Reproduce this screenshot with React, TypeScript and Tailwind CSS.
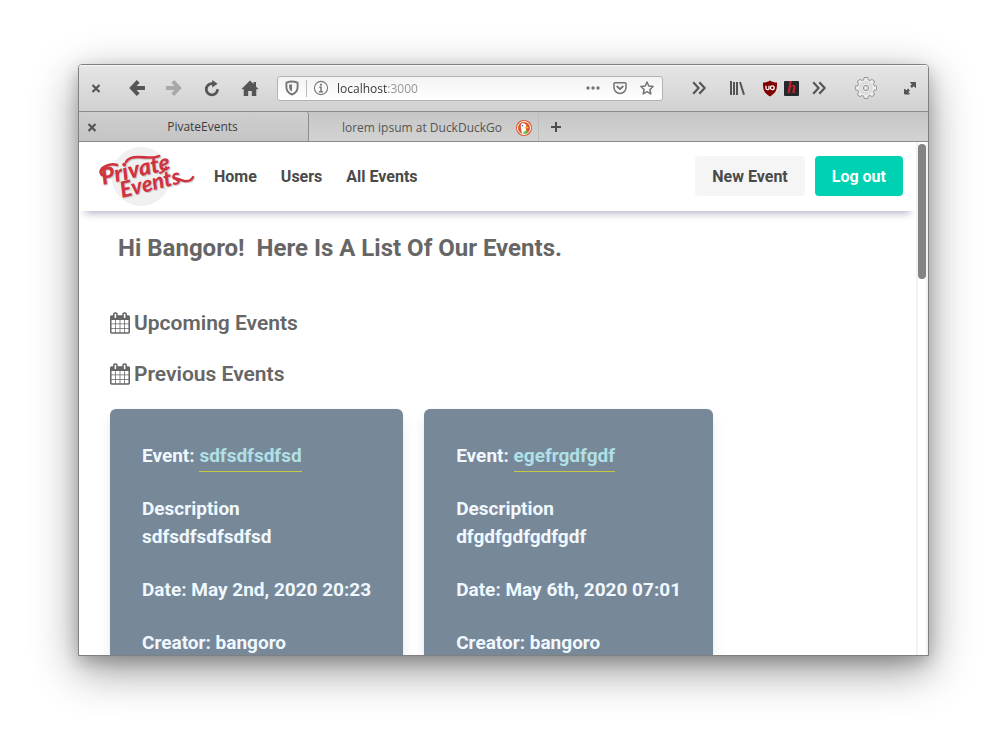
import type { ReactNode } from "react";

const calendarPath =
  "M192 1664h288v-288h-288v288zm352 0h320v-288h-320v288zm-352-352h288v-320h-288v320zm352 0h320v-320h-320v320zm-352-384h288v-288h-288v288zm736 736h320v-288h-320v288zm-384-736h320v-288h-320v288zm768 736h288v-288h-288v288zm-384-352h320v-320h-320v320zm-352-864v-288q0-13-9.5-22.5t-22.5-9.5h-64q-13 0-22.5 9.5t-9.5 22.5v288q0 13 9.5 22.5t22.5 9.5h64q13 0 22.5-9.5t9.5-22.5zm736 864h288v-320h-288v320zm-384-384h320v-288h-320v288zm384 0h288v-288h-288v288zm32-480v-288q0-13-9.5-22.5t-22.5-9.5h-64q-13 0-22.5 9.5t-9.5 22.5v288q0 13 9.5 22.5t22.5 9.5h64q13 0 22.5-9.5t9.5-22.5zm384-64v1280q0 52-38 90t-90 38h-1408q-52 0-90-38t-38-90v-1280q0-52 38-90t90-38h128v-96q0-66 47-113t113-47h64q66 0 113 47t47 113v96h384v-96q0-66 47-113t113-47h64q66 0 113 47t47 113v96h128q52 0 90 38t38 90z";

function CalendarIcon() {
  return (
    <svg viewBox="64 0 1664 1792" className="h-[22px] w-5 shrink-0" fill="currentColor" aria-hidden="true">
      <path d={calendarPath} />
    </svg>
  );
}

function CloseIcon() {
  return (
    <svg viewBox="0 0 10 10" className="size-[10px]" fill="none" stroke="#555" strokeWidth="2.2" aria-hidden="true">
      <path d="M1.500 2l7 7M8.500 2l-7 7" />
    </svg>
  );
}

function ArrowIcon({ flip = false }: { flip?: boolean }) {
  return (
    <svg viewBox="0 0 16 16" className="size-4" fill="none" stroke={flip ? "#a8a8a8" : "#555"} strokeWidth="4" aria-hidden="true">
      <path d={flip ? "M0 8h13M6.800 1.400L13 8l-6.200 6.600" : "M16 8H3M9.200 1.400L3 8l6.200 6.600"} />
    </svg>
  );
}

function ReloadIcon() {
  return (
    <svg viewBox="0 0 16 17" className="h-[17px] w-4" fill="none" aria-hidden="true">
      <path d="M13.5 9.200A5.600 5.600 0 1 1 8 3.700h2" stroke="#555" strokeWidth="2.8" />
      <path d="M8.2 0v7.500l5.400-3.700z" fill="#555" />
    </svg>
  );
}

function HomeIcon() {
  return (
    <svg viewBox="0 0 18 17" className="h-[17px] w-[18px]" fill="#555" aria-hidden="true">
      <path d="M9 .5L.3 9.3h2.4V16h4.5v-5h3.6v5h4.5V9.300h2.4L15 6.600V2h-2.500v2.100z" />
    </svg>
  );
}

function ShieldIcon() {
  return (
    <svg viewBox="0 0 14 16" className="h-4 w-[14px]" fill="none" aria-hidden="true">
      <path d="M7 1.500C9 1.500 11 2 12.600 2.600V7c0 3.600-2.200 6.200-5.600 7.500C3.600 13.200 1.400 10.600 1.400 7V2.600C3 2 5 1.500 7 1.500z" stroke="#777" strokeWidth="1.900" />
      <path d="M7 4.300v7.300c-1.800-.9-2.900-2.600-2.900-4.600V4.800C5 4.500 5.900 4.300 7 4.300z" fill="#777" />
    </svg>
  );
}

function InfoIcon() {
  return (
    <svg viewBox="0 0 16 16" className="size-4 shrink-0" fill="none" stroke="#777" aria-hidden="true">
      <circle cx="8" cy="8" r="6.600" strokeWidth="1.100" />
      <path d="M8 3.800v1.900" strokeWidth="1.800" />
      <path d="M6.300 7.300H8v4M6 11.700h4" strokeWidth="1.500" />
    </svg>
  );
}

function PocketIcon() {
  return (
    <svg viewBox="0 0 14 14" className="size-[14px]" fill="none" stroke="#737373" strokeWidth="1.500" strokeLinecap="round" strokeLinejoin="round" aria-hidden="true">
      <path d="M2 1.800h10a1 1 0 0 1 1 1v3.600a6 6 0 0 1-12 0V2.800a1 1 0 0 1 1-1z" />
      <path d="M4.200 5.500L7 8.100l2.800-2.600" strokeWidth="1.800" />
    </svg>
  );
}

function StarIcon() {
  return (
    <svg viewBox="0 0 14 14" className="size-[14px]" fill="none" stroke="#737373" strokeWidth="1.500" strokeLinejoin="round" aria-hidden="true">
      <path d="M7 1l1.800 4 4.300.5-3.200 3 .9 4.400L7 10.700l-3.800 2.200.9-4.400-3.200-3L5.200 5z" />
    </svg>
  );
}

function ChevronsIcon() {
  return (
    <svg viewBox="0 0 14 14" className="h-[14px] w-[14px]" fill="none" stroke="#555" strokeWidth="2.100" strokeLinejoin="round" aria-hidden="true">
      <path d="M1.200 1.200L6.600 7l-5.400 5.800M7.300 1.200L12.700 7l-5.400 5.800" />
    </svg>
  );
}

function LibraryIcon() {
  return (
    <svg viewBox="0 0 16 14" className="h-[14px] w-4" fill="none" stroke="#555" strokeWidth="2" aria-hidden="true">
      <path d="M2 0v14M5 1v13M8 1v13M11 1l4 12.700" />
    </svg>
  );
}

function UblockIcon() {
  return (
    <svg viewBox="0 0 16 17" className="h-[17px] w-4" aria-hidden="true">
      <path d="M8 .5C10 2 12.500 2.500 15 2.600c0 6.800-.4 10.200-7 13.900C1.400 12.800 1 9.400 1 2.600 3.500 2.500 6 2 8 .5z" fill="#800000" />
      <path d="M4 5.800v2.400q0 1.500 1.500 1.500T7 8.200V5.800" fill="none" stroke="#fff" strokeWidth="1.300" />
      <circle cx="10.300" cy="7.700" r="1.900" fill="none" stroke="#fff" strokeWidth="1.300" />
    </svg>
  );
}

function GearIcon() {
  const angles = [0, 45, 90, 135, 180, 225, 270, 315];
  return (
    <svg viewBox="0 0 24 24" className="size-6" aria-hidden="true">
      <g fill="#999" stroke="#999" strokeWidth="1.800" strokeLinejoin="round">
        <circle cx="12" cy="12" r="8" />
        {angles.map((a) => (
          <path key={a} d="M9.900 5l.6-3h3l.6 3z" transform={`rotate(${a} 12 12)`} />
        ))}
      </g>
      <g fill="#ececec">
        <circle cx="12" cy="12" r="8" />
        {angles.map((a) => (
          <path key={a} d="M9.900 5l.6-3h3l.6 3z" transform={`rotate(${a} 12 12)`} />
        ))}
      </g>
      <circle cx="12" cy="12" r="5.500" fill="none" stroke="#dadada" strokeWidth="2.500" />
      <circle cx="12" cy="12" r="2.700" fill="#dcdcdc" stroke="#999" />
    </svg>
  );
}

function ExpandIcon() {
  return (
    <svg viewBox="0 0 14 14" className="size-[14px]" fill="#555" stroke="#555" aria-hidden="true">
      <path d="M7.500 1.500h5v5zM1.500 8v5h5z" strokeWidth="1" />
      <path d="M8 6l3-3M3 11.500l3-3" strokeWidth="2.600" />
    </svg>
  );
}

function DuckIcon() {
  return (
    <svg viewBox="0 0 16 16" className="size-4" aria-hidden="true">
      <circle cx="8" cy="8" r="8" fill="#de5833" />
      <circle cx="8" cy="8" r="6.500" fill="#de5833" stroke="#fff" />
      <path d="M5 4.200c1-1.300 4.700-1.300 5.200 1.500.3 2-.6 3 .2 7.800-1.400.8-3 .9-4.300.3C5.700 10.500 4.200 6.500 5 4.200z" fill="#fff" />
      <path d="M8.500 7.200c1.400-.7 3.700-.6 4 0 .2.700-1.900 1.300-3.600 1.600z" fill="#fdb813" />
      <path d="M7.600 11.600l3.800-1v3l-4 .3z" fill="#66bd47" />
      <circle cx="6.500" cy="5.800" r=".7" fill="#2d4f8e" />
    </svg>
  );
}

function Logo() {
  return (
    <svg viewBox="0 0 110 68" className="h-[68px] w-[110px]" role="img" aria-label="Private Events">
      <circle cx="49" cy="34.500" r="29.500" fill="#f0f0f0" />
      {[
        { color: "#c9c9c9", dx: 1, dy: 1 },
        { color: "#d0323e", dx: 0, dy: 0 },
      ].map(({ color, dx, dy }) => (
        <g key={color} transform={`translate(${dx} ${dy})`} fill={color} className="font-['Lato','Liberation_Sans',sans-serif] font-black italic">
          <text x="11" y="43" fontSize="23" transform="rotate(-13 11 43)">Private</text>
          <text x="30" y="56" fontSize="22" transform="rotate(-14 30 56)">Events</text>
          <g fill="none" stroke={color} strokeLinecap="round">
            <path d="M10 33c-3-3-1-7 4-9 4-2 8-2 11-1" strokeWidth="2.600" />
            <path d="M34 20c2-4 6-5 12-5 8 0 16 2 21-1" strokeWidth="2.600" />
            <path d="M85 38c4-2 6 2 10 1 3 0 5-2 6-4" strokeWidth="2.400" />
            <path d="M74 25c-1 3-3 5-6 6" strokeWidth="2" />
          </g>
        </g>
      ))}
    </svg>
  );
}

function IconButton({ label, className, children }: { label: string; className: string; children: ReactNode }) {
  return (
    <button type="button" aria-label={label} className={`flex h-6 shrink-0 items-center justify-center ${className}`}>
      {children}
    </button>
  );
}

function Toolbar() {
  return (
    <div className="flex h-[47px] shrink-0 items-center border-b border-[#8e8e8e] bg-linear-to-b from-[#e6e6e6] to-[#d1d1d1] shadow-[inset_0_1px_0_#f6f6f6]">
      <IconButton label="Close window" className="ml-1.5 w-[22px]"><CloseIcon /></IconButton>
      <IconButton label="Back" className="ml-5 w-5"><ArrowIcon /></IconButton>
      <IconButton label="Forward" className="ml-4 w-[22px]"><ArrowIcon flip /></IconButton>
      <IconButton label="Reload" className="ml-4 w-[22px]"><ReloadIcon /></IconButton>
      <IconButton label="Home" className="ml-4 w-[22px]"><HomeIcon /></IconButton>
      <div className="ml-4 flex h-[25px] min-w-0 flex-1 items-center rounded-[3px] border border-[#b3b3b3] bg-linear-to-b from-[#f3f3f3] to-white pl-[7px] pr-2">
        <ShieldIcon />
        <span className="ml-[7px] h-[17px] w-px bg-[#bbb]" />
        <span className="ml-1.5"><InfoIcon /></span>
        <input
          aria-label="Address"
          defaultValue="localhost:3000"
          className="ml-2 min-w-0 flex-1 bg-[linear-gradient(to_right,#333_51px,#929292_51px)] bg-clip-text pt-0.5 text-xs text-transparent outline-none"
        />
        <IconButton label="Page actions" className="w-[14px]">
          <svg viewBox="0 0 14 4" className="h-1 w-[14px]" fill="#777" aria-hidden="true">
            <circle cx="2" cy="2" r="1.700" />
            <circle cx="7" cy="2" r="1.700" />
            <circle cx="12" cy="2" r="1.700" />
          </svg>
        </IconButton>
        <IconButton label="Save to Pocket" className="ml-[13px] w-[14px]"><PocketIcon /></IconButton>
        <IconButton label="Bookmark" className="ml-[13px] w-[14px]"><StarIcon /></IconButton>
      </div>
      <IconButton label="More tools" className="ml-7 w-4"><ChevronsIcon /></IconButton>
      <IconButton label="Library" className="ml-[22px] w-4"><LibraryIcon /></IconButton>
      <IconButton label="uBlock" className="ml-4 w-[18px]"><UblockIcon /></IconButton>
      <IconButton label="Extension" className="ml-[5px] w-[15px]">
        <span className="flex size-[15px] items-center justify-center rounded-[1px] bg-[#25292b] font-['Liberation_Serif',serif] text-base leading-none font-bold italic text-[#c3222a]">
          h
        </span>
      </IconButton>
      <IconButton label="More extensions" className="ml-3 w-4"><ChevronsIcon /></IconButton>
      <IconButton label="Settings" className="ml-[27px] w-6"><GearIcon /></IconButton>
      <IconButton label="Maximize window" className="mr-[11px] ml-[25px] w-[14px]"><ExpandIcon /></IconButton>
    </div>
  );
}

function TabStrip() {
  return (
    <div className="flex h-[30px] shrink-0 border-b border-[#8a8a8a] bg-linear-to-b from-[#c6c6c6] to-[#d3d3d3] text-xs text-[#3c3c3c]">
      <div className="flex w-[230px] items-center rounded-t-[3px] border-r border-[#8c8c8c] bg-linear-to-b from-[#cecece] to-[#c5c5c5]">
        <IconButton label="Close tab" className="ml-0.5 w-[22px]"><CloseIcon /></IconButton>
        <button type="button" className="flex-1 pr-[6px]">PivateEvents</button>
      </div>
      <button type="button" className="flex w-[230px] items-center justify-end border-r border-[#bdbdbd] pt-0.5 pr-1.5 text-[#555]">
        lorem ipsum at DuckDuckGo
        <span className="ml-[14px]"><DuckIcon /></span>
      </button>
      <button type="button" aria-label="New tab" className="flex w-[34px] items-center justify-center">
        <svg viewBox="0 0 10 10" className="size-[10px]" stroke="#4c4c4c" strokeWidth="2" aria-hidden="true">
          <path d="M5 0v10M0 5h10" />
        </svg>
      </button>
    </div>
  );
}

interface EventInfo {
  name: string;
  description: string;
  date: string;
  creator: string;
}

const previousEvents: EventInfo[] = [
  { name: "sdfsdfsdfsd", description: "sdfsdfsdfsdfsd", date: "May 2nd, 2020 20:23", creator: "bangoro" },
  { name: "egefrgdfgdf", description: "dfgdfgdfgdfgdf", date: "May 6th, 2020 07:01", creator: "bangoro" },
];

function EventCard({ event }: { event: EventInfo }) {
  return (
    <article className="flex flex-col gap-[25px] rounded-md bg-[#778899] px-8 py-[33px] text-[19px] leading-7 font-bold text-[#f0f8ff] shadow-[0_8px_16px_-2px_rgba(10,10,10,0.1),0_0_0_1px_rgba(10,10,10,0.02)]">
      <p>
        Event: <a href="#event" className="border-b border-[#c5c93f] pb-1 text-[#b0e0e6]">{event.name}</a>
      </p>
      <p>
        Description
        <br />
        {event.description}
      </p>
      <p>Date: {event.date}</p>
      <p>Creator: {event.creator}</p>
    </article>
  );
}

function Page() {
  return (
    <div className="min-w-0 flex-1 overflow-hidden font-['Roboto',sans-serif] font-bold">
      <nav className="flex h-[69px] items-center bg-white px-[13px] pb-px text-base text-[#4a4a4a] shadow-[0_8px_8px_-6px_rgba(60,50,100,0.4)]">
        <a href="#top"><Logo /></a>
        <a href="#home" className="ml-3 pt-px">Home</a>
        <a href="#users" className="ml-6 pt-px">Users</a>
        <a href="#events" className="ml-6 pt-px">All Events</a>
        <div className="ml-auto flex gap-[10px]">
          <button type="button" className="h-10 rounded bg-[#f5f5f5] px-[17px] pt-px">New Event</button>
          <button type="button" className="h-10 rounded bg-[#00d1b2] px-[17px] pt-px text-white">Log out</button>
        </div>
      </nav>
      <main className="px-[31px] text-[#666]">
        <h1 className="px-2 pt-[19px] text-2xl leading-9">Hi Bangoro! &nbsp;Here Is A List Of Our Events.</h1>
        <h2 className="mt-[42px] flex items-center gap-1 text-[21px] leading-[30px] font-semibold">
          <CalendarIcon /> Upcoming Events
        </h2>
        <h2 className="mt-[21px] flex items-center gap-1 text-[21px] leading-[30px] font-semibold">
          <CalendarIcon /> Previous Events
        </h2>
        <section className="mt-5 flex items-start gap-[21px]">
          {previousEvents.map((event) => (
            <EventCard key={event.name} event={event} />
          ))}
        </section>
      </main>
    </div>
  );
}

export default function App() {
  return (
    <div className="flex h-screen bg-white px-[78px] pt-16 pb-[92px] font-['Open_Sans','Noto_Sans',sans-serif]">
      <div className="flex min-w-0 flex-1 flex-col overflow-hidden rounded-t-[4px] border border-[#808080] bg-white shadow-[0_14px_45px_rgba(0,0,0,0.42),0_6px_16px_rgba(0,0,0,0.2)]">
        <Toolbar />
        <TabStrip />
        <div className="flex min-h-0 flex-1">
          <Page />
          <div className="w-3 shrink-0 border-x-2 border-[#f2f2f2] bg-white pt-0.5">
            <div className="h-[135px] rounded-full bg-[#838383]" />
          </div>
        </div>
      </div>
    </div>
  );
}
